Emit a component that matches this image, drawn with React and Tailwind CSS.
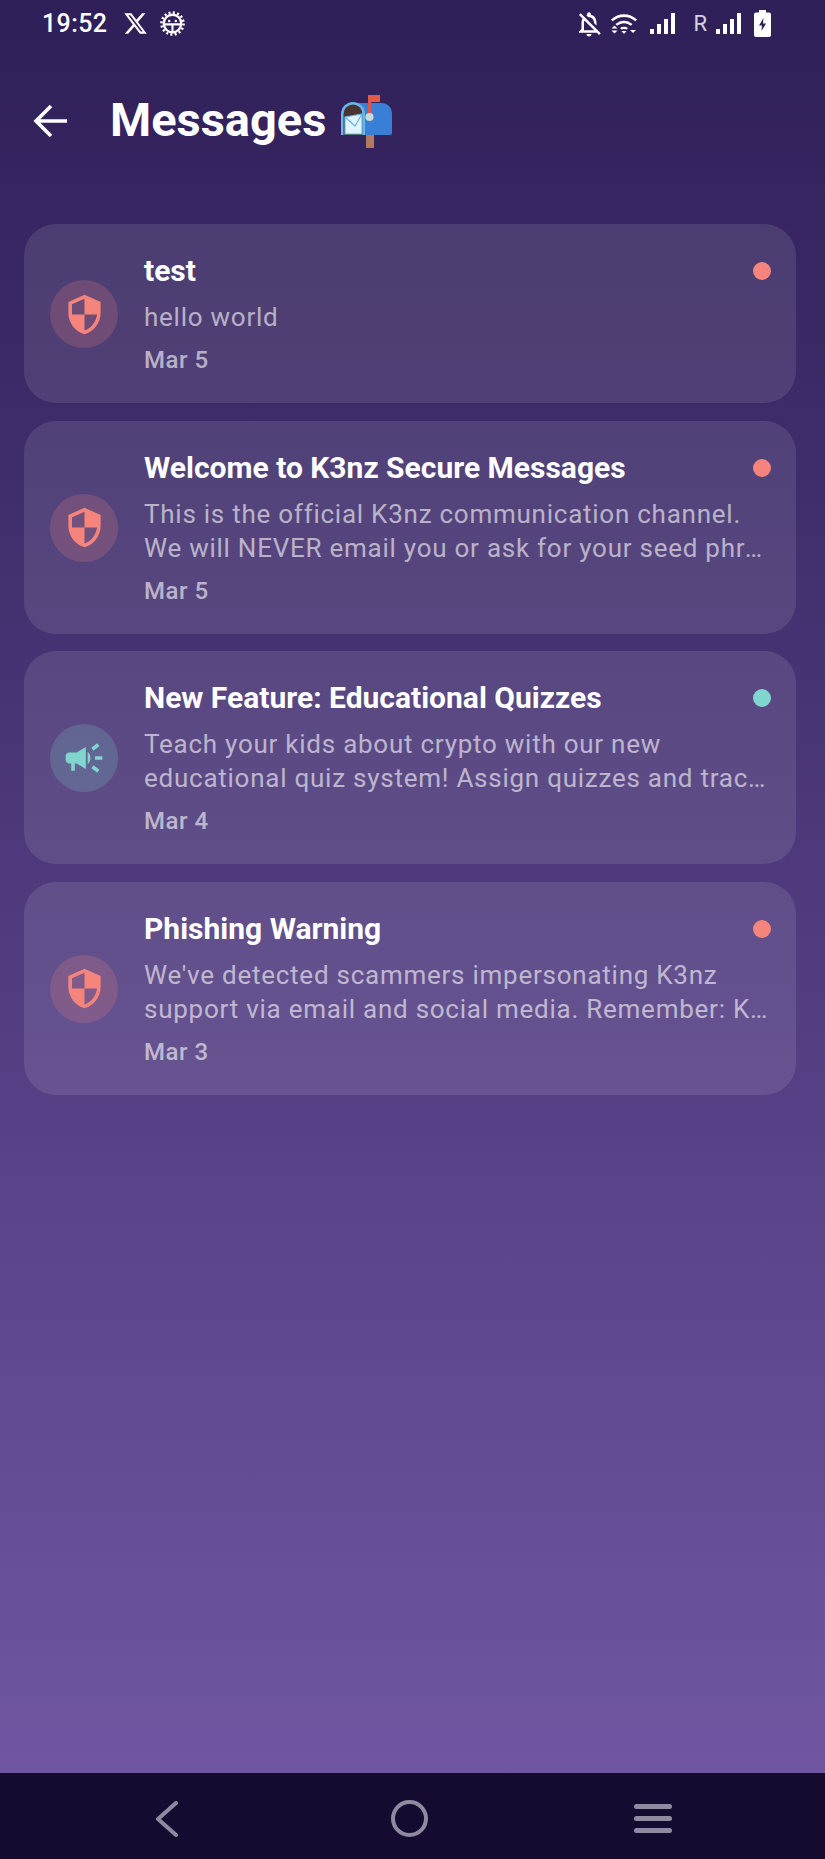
import React from 'react';
import { FaXTwitter } from 'react-icons/fa6';
import { MdCampaign, MdOutlineNotificationsOff, MdSecurity } from 'react-icons/md';

const messages = [
  { title: 'test', lines: ['hello world'], date: 'Mar 5', kind: 'security' },
  {
    title: 'Welcome to K3nz Secure Messages',
    lines: [
      'This is the official K3nz communication channel.',
      'We will NEVER email you or ask for your seed phrase, private keys or passwords.',
    ],
    date: 'Mar 5',
    kind: 'security',
  },
  {
    title: 'New Feature: Educational Quizzes',
    lines: [
      'Teach your kids about crypto with our new',
      'educational quiz system! Assign quizzes and track their progress as they learn.',
    ],
    date: 'Mar 4',
    kind: 'announcement',
  },
  {
    title: 'Phishing Warning',
    lines: [
      "We've detected scammers impersonating K3nz",
      'support via email and social media. Remember: K3nz will never contact you first.',
    ],
    date: 'Mar 3',
    kind: 'security',
  },
];

const RobotGear = () => (
  <svg width="25" height="25" viewBox="0 0 24 24" fill="none" stroke="white">
    <circle cx="12" cy="12" r="8.4" strokeWidth="2.2" />
    <circle cx="12" cy="12" r="10.6" strokeWidth="2.4" strokeDasharray="2 2.16" />
    <path d="M4 12.8h16M12 12.8v7" strokeWidth="2" />
    <circle cx="8.8" cy="9.6" r="1.2" fill="white" stroke="none" />
    <circle cx="15.2" cy="9.6" r="1.2" fill="white" stroke="none" />
  </svg>
);

const Wifi = () => (
  <svg width="28" height="24" viewBox="0 0 28 24" fill="white">
    <path d="M1 7.5C8.5 .5 19.500 .5 27 7.5l-1.600 1.800C18.800 3.400 9.200 3.400 2.600 9.300z" />
    <path d="M5.500 12C10.500 7.500 17.500 7.500 22.500 12l-1.600 1.800C16.800 10.300 11.200 10.300 7.100 13.800z" />
    <path d="M10 16c2.400-1.700 5.600-1.700 8 0l-1.500 1.600c-1.500-.9-3.500-.9-5 0z" />
    <path d="M11.500 19h5L14 22z" />
    <path d="M1.500 16.500h6l-3-3zM1.500 18.500h6l-3 3z" />
    <path d="M20 18h6l-3 3z" />
  </svg>
);

const Signal = () => (
  <svg width="25" height="22" viewBox="0 0 25 22" fill="white">
    <rect x="0" y="16" width="4" height="5" />
    <rect x="7" y="11" width="4" height="10" />
    <rect x="14" y="6" width="4" height="15" />
    <rect x="21" y="0" width="4" height="21" />
  </svg>
);

const Battery = () => (
  <svg width="17" height="27" viewBox="0 0 17 27" fill="white">
    <path d="M5 0h7v2.500h3a2 2 0 0 1 2 2V25a2 2 0 0 1-2 2H2a2 2 0 0 1-2-2V4.500a2 2 0 0 1 2-2h3z" />
    <path d="M9.500 8L5 15.500h3L7.500 21 12 13.500H9z" fill="#32215a" />
  </svg>
);

const Mailbox = () => (
  <svg width="54" height="54" viewBox="0 0 54 54">
    <rect x="26" y="40" width="8" height="14" fill="#b27a60" />
    <path d="M16 9h26a10 10 0 0 1 10 10v20a2 2 0 0 1-2 2H16z" fill="#3a7fd6" />
    <path d="M1 41V20a12 12 0 0 1 24 0v21z" fill="#66b7ea" />
    <path d="M3.500 41V20a9.500 9.500 0 0 1 19 0v21z" fill="#4a342f" />
    <path d="M5 23l17-3v20H5z" fill="#e3f3fb" stroke="#66b7ea" strokeWidth="1.200" />
    <path d="M5 23l10 9 7-12" fill="none" stroke="#66b7ea" strokeWidth="1.200" />
    <rect x="28" y="1" width="3.500" height="24" fill="#d9534f" />
    <rect x="28" y="1" width="12" height="7" fill="#e25a4e" />
    <circle cx="29.500" cy="23" r="4" fill="#cfd8dc" />
  </svg>
);

const StatusBar = () => (
  <div className="h-[47px] flex items-center justify-between pl-[42px] pr-[54px] text-white">
    <div className="flex items-center">
      <span className="text-[25px] font-medium tracking-[0.4px]">19:52</span>
      <FaXTwitter className="ml-[16px] text-[25px]" />
      <span className="ml-[12px] flex">
        <RobotGear />
      </span>
    </div>
    <div className="flex items-center">
      <MdOutlineNotificationsOff className="text-[30px]" />
      <span className="ml-[6px] flex"><Wifi /></span>
      <span className="ml-[12px] flex"><Signal /></span>
      <span className="ml-[18px] text-[22px] leading-none text-white/80">R</span>
      <span className="ml-[9px] flex"><Signal /></span>
      <span className="ml-[13px] flex"><Battery /></span>
    </div>
  </div>
);

const MessageCard = ({ message }) => {
  const isSecurity = message.kind === 'security';

  return (
    <div className="flex items-center rounded-[32px] bg-white/10 pl-[26px] pr-[25px] pt-[27px] pb-[26px]">
      <div
        className={`w-[68px] h-[68px] shrink-0 rounded-full flex items-center justify-center ${
          isSecurity ? 'bg-[#f5857c]/20' : 'bg-[#80d6cf]/20'
        }`}
      >
        {isSecurity ? (
          <MdSecurity className="text-[43px] text-[#f5857c]" />
        ) : (
          <MdCampaign className="text-[44px] text-[#80d6cf]" />
        )}
      </div>
      <div className="ml-[26px] min-w-0 flex-1">
        <div className="flex items-center justify-between">
          <h2 className="text-[30px] leading-[40px] font-bold text-white">{message.title}</h2>
          <span
            className={`w-[18px] h-[18px] rounded-full shrink-0 ${
              isSecurity ? 'bg-[#f5857c]' : 'bg-[#80d6cf]'
            }`}
          />
        </div>
        <div className="mt-[9px] pr-px text-[26px] leading-[34px] tracking-[0.75px] text-white/60">
          {message.lines.map((line, index) => (
            <p key={index} className="truncate">
              {line}
            </p>
          ))}
        </div>
        <p className="mt-[9px] text-[24px] leading-[34px] font-medium tracking-[0.5px] text-white/60">
          {message.date}
        </p>
      </div>
    </div>
  );
};

const App = () => {
  return (
    <div className="w-[825px] h-[1859px] flex flex-col overflow-hidden font-['Roboto',sans-serif]">
      <div className="h-[1773px] bg-gradient-to-b from-[#2f1f58] to-[#7056a2]">
        <StatusBar />
        <div className="h-[147px] flex items-center pl-[32px]">
          <svg width="36" height="36" viewBox="0 0 36 36" fill="none" stroke="white" strokeWidth="3.6">
            <path d="M35 18H4M19 3 4 18l15 15" />
          </svg>
          <h1 className="ml-[42px] text-[47px] font-bold text-white">Messages</h1>
          <span className="ml-[14px] flex"><Mailbox /></span>
        </div>
        <div className="mt-[30px] pl-[24px] pr-[29px] flex flex-col gap-[17.5px]">
          {messages.map((message, index) => (
            <MessageCard key={index} message={message} />
          ))}
        </div>
      </div>

      {/* Android nav bar */}
      <div className="h-[86px] bg-[#150b30] flex items-center justify-center pt-[5px] pr-[6px]">
        <div className="w-[243px] flex justify-center">
          <svg width="26" height="36" viewBox="0 0 26 36" fill="none" stroke="#8f8a9f" strokeWidth="4" strokeLinecap="round" strokeLinejoin="round">
            <path d="M22 2 L4 18 L22 34" />
          </svg>
        </div>
        <div className="w-[243px] flex justify-center">
          <div className="w-[37px] h-[37px] rounded-full border-4 border-[#8f8a9f]" />
        </div>
        <div className="w-[243px] flex justify-center">
          <div className="w-[38px] flex flex-col gap-[7px]">
            <div className="h-[5px] rounded-full bg-[#8f8a9f]" />
            <div className="h-[5px] rounded-full bg-[#8f8a9f]" />
            <div className="h-[5px] rounded-full bg-[#8f8a9f]" />
          </div>
        </div>
      </div>
    </div>
  );
};

export default App;
